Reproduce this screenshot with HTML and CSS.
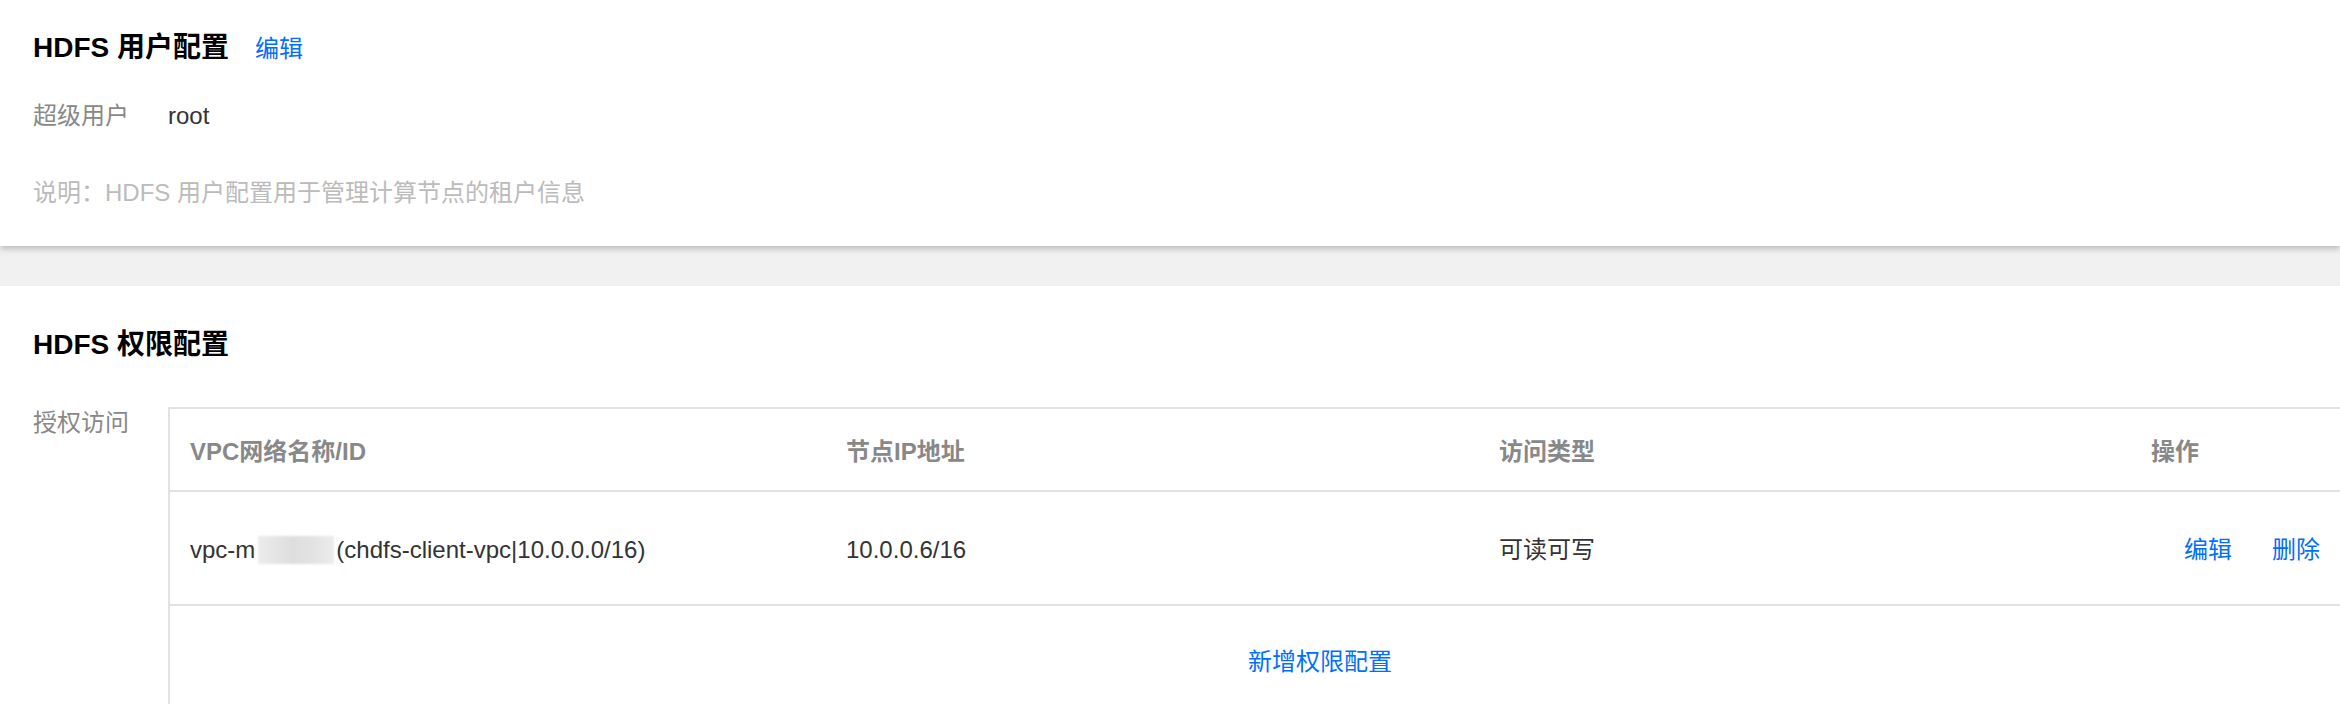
FILE: index.html
```html
<!DOCTYPE html>
<html lang="zh-CN">
<head>
<meta charset="utf-8">
<title>HDFS 配置</title>
<link rel="stylesheet" href="styles.css">
</head>
<body>
<section class="card card-user">
  <div class="title-row">
    <h2 class="title">HDFS 用户配置</h2>
    <a class="link" href="#">编辑</a>
  </div>
  <div class="kv">
    <span class="kv-label">超级用户</span>
    <span class="kv-value">root</span>
  </div>
  <p class="note">说明：HDFS 用户配置用于管理计算节点的租户信息</p>
</section>
<div class="band"></div>
<section class="card card-perm">
  <div class="title-row">
    <h2 class="title">HDFS 权限配置</h2>
  </div>
  <div class="form-row">
    <span class="kv-label form-label">授权访问</span>
    <table class="grid">
      <colgroup>
        <col class="c1"><col class="c2"><col class="c3"><col class="c4">
      </colgroup>
      <thead>
        <tr>
          <th>VPC网络名称/ID</th>
          <th>节点IP地址</th>
          <th>访问类型</th>
          <th>操作</th>
        </tr>
      </thead>
      <tbody>
        <tr class="data-row">
          <td>vpc-m<span class="masked"></span>(chdfs-client-vpc|10.0.0.0/16)</td>
          <td>10.0.0.6/16</td>
          <td>可读可写</td>
          <td class="ops"><a class="link" href="#">编辑</a><a class="link ops-gap" href="#">删除</a></td>
        </tr>
        <tr class="add-row">
          <td colspan="4"><a class="link" href="#">新增权限配置</a></td>
        </tr>
      </tbody>
    </table>
  </div>
</section>
</body>
</html>
```

FILE: styles.css
```css
html, body {
  margin: 0;
  padding: 0;
  background: #fff;
  overflow: hidden;
}
body {
  font-family: "Liberation Sans", "Noto Sans CJK SC", sans-serif;
  font-size: 24px;
  color: #333;
  width: 2340px;
}
.card {
  background: #fff;
  padding: 28px 0 36px 33px;
}
.card-user {
  position: relative;
  z-index: 1;
  box-shadow: 0 3px 6px rgba(0, 0, 0, 0.22);
}
.card-perm {
  padding-top: 39px;
  padding-bottom: 0;
}
.title-row {
  display: flex;
  align-items: baseline;
  gap: 26px;
  height: 40px;
  line-height: 40px;
}
.title {
  margin: 0;
  font-size: 28px;
  font-weight: bold;
  color: #000;
}
.link {
  color: #006eff;
  text-decoration: none;
  font-size: 24px;
}
.kv {
  display: flex;
  margin-top: 31px;
  line-height: 34px;
}
.kv-label {
  width: 135px;
  flex: none;
  color: #888;
}
.kv-value {
  color: #333;
}
.note {
  margin: 43px 0 0;
  line-height: 34px;
  color: #bbb;
}
.band {
  height: 40px;
  background: #f1f1f1;
}
.form-row {
  display: flex;
  align-items: flex-start;
  margin-top: 42px;
}
.form-label {
  line-height: 28px;
  padding-top: 2px;
}
.grid {
  flex: 1;
  min-width: 0;
  table-layout: fixed;
  border-collapse: separate;
  border-spacing: 0;
  border-top: 2px solid #e2e2e2;
  border-left: 2px solid #e2e2e2;
}
.c1 { width: 656px; }
.c2 { width: 653px; }
.c3 { width: 652px; }
.c4 { width: auto; }
.grid th,
.grid td {
  text-align: left;
  padding: 0 20px;
  line-height: 34px;
  white-space: nowrap;
}
.grid th {
  padding-top: 26px;
  padding-bottom: 21px;
  color: #888;
  font-weight: bold;
  border-bottom: 2px solid #e2e2e2;
}
.data-row td {
  padding-top: 41px;
  padding-bottom: 37px;
  color: #333;
  border-bottom: 2px solid #e2e2e2;
}
.grid td.ops {
  padding-left: 53px;
}
.ops-gap {
  margin-left: 40px;
}
.masked {
  display: inline-block;
  width: 76px;
  height: 28px;
  margin: 0 2px 0 3px;
  vertical-align: -6px;
  background: linear-gradient(90deg, #ececec, #dedede 45%, #e2e2e2 70%, #ececec);
  filter: blur(1px);
}
.grid .add-row td {
  text-align: center;
  padding: 39px 20px 38px 150px;
}
```
